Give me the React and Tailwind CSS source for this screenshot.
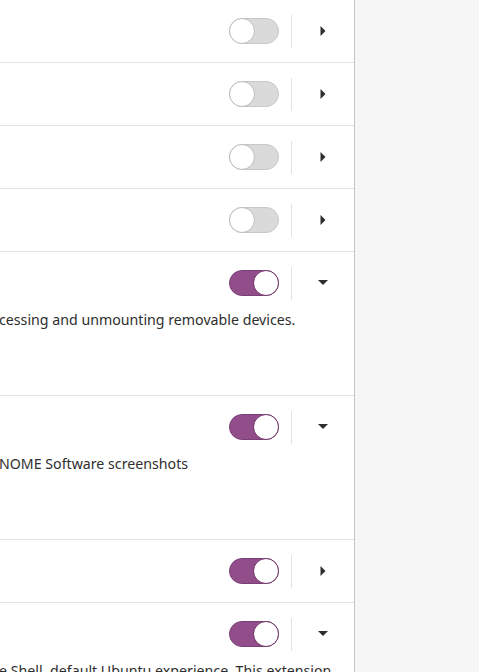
const rows = [
  { on: false },
  { on: false },
  { on: false },
  { on: false },
  { on: true, open: true, text: "cessing and unmounting removable devices." },
  { on: true, open: true, text: "NOME Software screenshots" },
  { on: true },
  { on: true, open: true, text: "e Shell, default Ubuntu experience. This extension" },
];

const Switch = ({ on }) => (
  <div
    className={`relative w-[50px] h-[26px] rounded-full border ${
      on ? "bg-[#924d8b] border-[#7a3f74]" : "bg-[#dadada] border-[#c8c8c8]"
    }`}
  >
    <div
      className={`absolute top-[-1px] w-[26px] h-[26px] rounded-full bg-white border ${
        on ? "right-[-1px] border-[#6e3568]" : "left-[-1px] border-[#bdbdbd]"
      }`}
    />
  </div>
);

const Arrow = ({ open }) =>
  open ? (
    <svg width="10" height="6" viewBox="0 0 10 6">
      <path d="M0 0h10L5 5z" fill="#2e2e2e" />
    </svg>
  ) : (
    <svg width="6" height="10" viewBox="0 0 6 10">
      <path d="M0.5 0v10L5.5 5z" fill="#2e2e2e" />
    </svg>
  );

const Row = ({ on, open, text }) => (
  <div
    className={`flex flex-col border-b border-[#e2e2e2] ${
      open ? "h-[144px]" : "h-[63px]"
    }`}
  >
    <div className="flex items-center justify-end h-[62px] shrink-0">
      <Switch on={on} />
      <div className="w-px h-[33px] bg-[#e3e3e3] ml-3" />
      <div className="w-[62px] flex items-center justify-center">
        <Arrow open={open} />
      </div>
    </div>
    {open && (
      <p className="-mt-[2px] text-[14.2px] leading-4 text-[#2e2e2e] whitespace-nowrap -ml-px">
        {text}
      </p>
    )}
  </div>
);

export default function App() {
  return (
    <div
      className="flex w-[479px] h-[672px] overflow-hidden bg-[#f6f6f6]"
      style={{ fontFamily: '"Noto Sans", "Open Sans", sans-serif' }}
    >
      <div className="w-[355px] shrink-0 bg-white border-r border-[#c3c3c3] overflow-hidden">
        {rows.map((r, i) => (
          <Row key={i} {...r} />
        ))}
      </div>
      <div className="flex-1" />
    </div>
  );
}
